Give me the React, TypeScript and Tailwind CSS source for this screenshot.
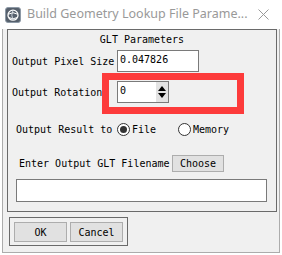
import * as React from "react";

const mono = { fontFamily: '"DejaVu Sans Mono", "Liberation Mono", monospace' };

function AppIcon() {
  return (
    <svg width="16" height="16" viewBox="0 0 16 16">
      <rect x="0.5" y="0.5" width="15" height="15" rx="2.5" fill="#56606c" stroke="#8d99a6" />
      <circle cx="8" cy="8.2" r="5" fill="none" stroke="#fff" strokeWidth="1.3" />
      <path d="M3.4 7.2 Q8 4.2 12.6 7.2" fill="none" stroke="#fff" strokeWidth="1" />
      <path d="M4 10.6 Q8 13 12 10.6" fill="none" stroke="#fff" strokeWidth="1" />
      <path d="M8 3.2 Q5.6 8 8 13.2" fill="none" stroke="#d7dde4" strokeWidth="0.9" />
    </svg>
  );
}

function Radio({ checked }: { checked?: boolean }) {
  return (
    <span className="w-[13px] h-[13px] rounded-full border border-[#333] bg-white flex items-center justify-center shrink-0">
      {checked && <span className="w-[7px] h-[7px] rounded-full bg-[#333]" />}
    </span>
  );
}

function Btn({ label, w }: { label: string; w: string }) {
  return (
    <div
      className={`${w} h-full border border-[#adadad] bg-[#e1e1e1] flex items-center justify-center text-[10px] text-black`}
      style={mono}
    >
      {label}
    </div>
  );
}

export default function App() {
  return (
    <div className="relative w-[282px] h-[255px] bg-white overflow-hidden">
      {/* title bar */}
      <div className="h-[29px] flex items-center bg-white">
        <div className="ml-[5px] mt-[1px]">
          <AppIcon />
        </div>
        <span
          className="ml-[6px] text-[12.5px] text-[#999] whitespace-nowrap"
          style={{ fontFamily: '"Noto Sans", "Liberation Sans", sans-serif' }}
        >
          Build Geometry Lookup File Parame...
        </span>
        <svg className="ml-auto mr-[13px]" width="11" height="11" viewBox="0 0 11 11">
          <path d="M0.5 0.5 L10.5 10.5 M10.5 0.5 L0.5 10.5" stroke="#999" strokeWidth="1" />
        </svg>
      </div>

      {/* window body */}
      <div className="mx-[2px] h-[224px] border-x border-b border-[#acacac] bg-[#f0f0f0] text-black" style={mono}>
        <div className="ml-[4px] mr-[2px] h-[183px] border border-[#6a6a6a] flex flex-col text-[10px]">
          <div className="mt-[3px] h-[14px] leading-[14px] text-center">GLT Parameters</div>

          <div className="mt-[3px] flex items-center h-[22px]">
            <span className="pl-[4px] w-[109px]">Output Pixel Size</span>
            <div className="w-[82px] h-[22px] border border-[#7a7a7a] bg-white pl-[2px] pt-[2px] leading-[14px]">
              0.047826
            </div>
          </div>

          <div className="mt-[9px] flex items-center h-[22px]">
            <span className="pl-[4px] w-[109px]">Output Rotation</span>
            <div className="w-[52px] h-[22px] border border-[#7a7a7a] bg-white flex">
              <span className="flex-1 pl-[2px] pt-[2px] leading-[14px]">0</span>
              <div className="w-[12px] bg-[#e3e3e3] flex items-center justify-center">
                <svg width="12" height="20" viewBox="0 0 12 20">
                  <polygon points="2,9 6,4 10,9" fill="#000" />
                  <polygon points="2,11 6,16 10,11" fill="#000" />
                </svg>
              </div>
            </div>
          </div>

          <div className="mt-[19px] flex items-center h-[14px]">
            <span className="pl-[8px] w-[109px]">Output Result to</span>
            <Radio checked />
            <span className="ml-[2px] w-[46px]">File</span>
            <Radio />
            <span className="ml-[2px]">Memory</span>
          </div>

          <div className="mt-[19px] flex items-center h-[17px]">
            <span className="pl-[11px] w-[164px]">Enter Output GLT Filename</span>
            <Btn label="Choose" w="w-[52px]" />
          </div>

          <div className="mt-[7px] ml-[8px] w-[251px] h-[23px] border border-[#7a7a7a] bg-white" />
        </div>

        <div className="ml-[6px] mt-[5px] w-[119px] h-[29px] border border-[#6a6a6a] pl-[4px] pt-[4px] pb-[3px] flex gap-[3px]">
          <Btn label="OK" w="w-[53px]" />
          <Btn label="Cancel" w="w-[53px]" />
        </div>
      </div>

      {/* red annotation box */}
      <div className="absolute left-[102px] top-[73px] w-[142px] h-[41px] border-[7px] border-[#fd3b3b]" />
    </div>
  );
}
